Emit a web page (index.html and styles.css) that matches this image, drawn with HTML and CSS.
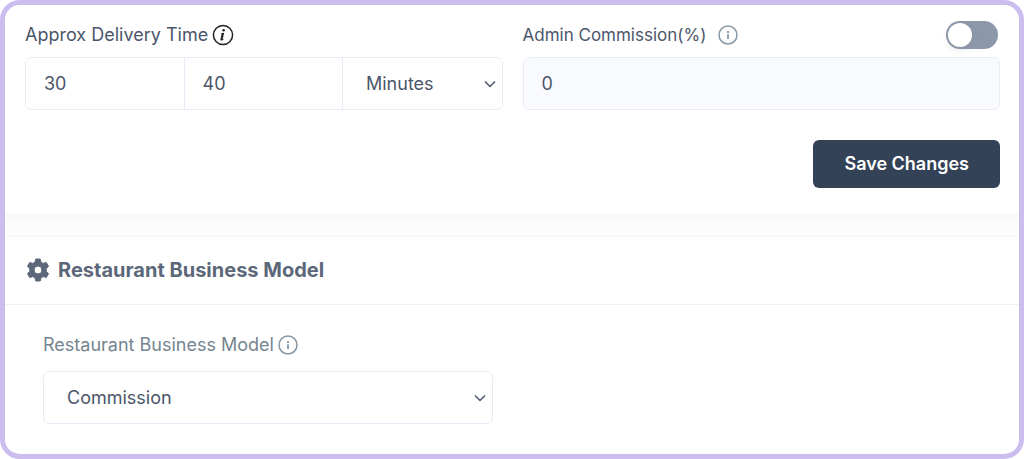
FILE: index.html
```html
<!DOCTYPE html>
<html lang="en">
<head>
    <meta charset="UTF-8">
    <meta name="viewport" content="width=device-width, initial-scale=1.0">
    <title>Restaurant Business Model</title>
    <link rel="stylesheet" href="styles.css">
</head>
<body>

    <main class="frame">
        <form class="card settings">
            <div class="row">
                <div class="field">
                    <div class="label-row">
                        <label for="min-time">Approx Delivery Time</label>
                        <svg class="info dark" viewBox="0 0 22 22">
                            <circle cx="11" cy="11" r="9.6" fill="none" stroke="currentColor" stroke-width="1.5"/>
                            <circle cx="11.6" cy="6.2" r="1.3" fill="currentColor"/>
                            <path d="M8.800 9.300l3.400-.5-1.500 6.200c-.1.500.3.500 1.400-.4-.8 1.500-1.800 2-2.600 2-1 0-1.300-.7-1-1.800l1.100-4.500z" fill="currentColor"/>
                        </svg>
                    </div>
                    <div class="input-group">
                        <input type="text" id="min-time" value="30">
                        <input type="text" id="max-time" value="40" aria-label="Maximum time">
                        <div class="select">
                            <select id="time-type" aria-label="Time unit">
                                <option>Minutes</option>
                                <option>Hours</option>
                            </select>
                            <svg class="arrow" viewBox="0 0 12 8"><path d="M1 1.5l5 5 5-5" fill="none" stroke="currentColor" stroke-width="1.5"/></svg>
                        </div>
                    </div>
                </div>

                <div class="field">
                    <div class="label-row compact">
                        <label for="commission">Admin Commission(%)</label>
                        <svg class="info" viewBox="0 0 20 20">
                            <circle cx="10" cy="10" r="9" fill="none" stroke="currentColor" stroke-width="1.5"/>
                            <path d="M10 6v2M10 9.300v4.700" stroke="currentColor" stroke-width="1.8"/>
                        </svg>
                        <input type="checkbox" class="toggle" aria-label="Enable admin commission">
                    </div>
                    <input type="text" id="commission" class="readonly" value="0" readonly>
                </div>
            </div>

            <div class="actions">
                <button type="button" class="btn">Save Changes</button>
            </div>
        </form>

        <section class="card model">
            <header class="card-header">
                <svg class="gear" viewBox="0 0 24 24">
                    <path fill="currentColor" stroke="currentColor" stroke-width="1" stroke-linejoin="round" fill-rule="evenodd" d="M9.800 1h4.400l.8 3.200 2.100 1.200 3.200-.9 2.200 3.800-2.300 2.400v2.600l2.300 2.400-2.200 3.800-3.200-.9-2.100 1.200-.8 3.200H9.800L9 19.800l-2.100-1.200-3.200.9-2.200-3.800 2.300-2.400v-2.600L1.500 8.300l2.200-3.800 3.200.9L9 4.200zM12 8a4 4 0 1 0 0 8 4 4 0 0 0 0-8z"/>
                </svg>
                <h2>Restaurant Business Model</h2>
            </header>
            <div class="card-body">
                <div class="field">
                    <div class="label-row muted">
                        <label for="business-model">Restaurant Business Model</label>
                        <svg class="info" viewBox="0 0 20 20">
                            <circle cx="10" cy="10" r="9" fill="none" stroke="currentColor" stroke-width="1.5"/>
                            <path d="M10 6v2M10 9.300v4.700" stroke="currentColor" stroke-width="1.8"/>
                        </svg>
                    </div>
                    <div class="select boxed">
                        <select id="business-model">
                            <option>Commission</option>
                            <option>Subscription</option>
                        </select>
                        <svg class="arrow" viewBox="0 0 12 8"><path d="M1 1.5l5 5 5-5" fill="none" stroke="currentColor" stroke-width="1.5"/></svg>
                    </div>
                </div>
            </div>
        </section>
    </main>

</body>
</html>
```

FILE: styles.css
```css
* {
    box-sizing: border-box;
}

body {
    font-family: Inter, "Liberation Sans", sans-serif;
    font-size: 18px;
    line-height: 28px;
    margin: 0;
    color: #4b566b;
    background-color: #fff;
}

.frame {
    min-height: 100vh;
    border: 5px solid #cbbdee;
    border-radius: 20px;
    background-color: #fdfdfd;
    overflow: hidden;
}

.card {
    background-color: #fff;
}

.settings {
    padding: 16px 19px 26px 20px;
    margin-bottom: 21px;
    border-bottom: 1px solid #f5f7f7;
    box-shadow: 0 4px 10px rgba(140, 152, 164, 0.06);
}

.row {
    display: grid;
    grid-template-columns: 1fr 1fr;
    gap: 20px;
}

.label-row {
    display: flex;
    align-items: center;
    gap: 4px;
    margin-bottom: 8px;
}

.label-row.compact {
    font-size: 17px;
    gap: 12px;
}

.muted {
    color: #758590;
}

.info {
    width: 20px;
    height: 20px;
    color: #8797a3;
}

.info.dark {
    width: 22px;
    height: 22px;
    color: #222;
}

.toggle {
    appearance: none;
    display: flex;
    width: 52px;
    height: 28px;
    margin: 0 2px 0 auto;
    padding: 2px;
    border-radius: 14px;
    background-color: #8c98a9;
    cursor: pointer;
}

.toggle::before {
    content: "";
    width: 24px;
    height: 24px;
    border-radius: 50%;
    background-color: #fff;
    box-shadow: 0 3px 6px rgba(140, 152, 164, 0.25);
}

.toggle:checked {
    justify-content: flex-end;
    background-color: #334257;
}

input[type="text"],
select {
    font: inherit;
    color: inherit;
    width: 100%;
    height: 51px;
    border: 0;
    padding: 0 18px;
    background-color: transparent;
}

.input-group,
.boxed,
input[type="text"].readonly {
    border: 1px solid #e9ecf7;
    border-radius: 6px;
}

.input-group {
    display: grid;
    grid-template-columns: 1fr 1fr 1fr;
}

.input-group input[type="text"] {
    border-right: 1px solid #e9ecf7;
}

input[type="text"].readonly {
    height: 53px;
    background-color: #f8fafe;
}

.select {
    position: relative;
}

select {
    display: block;
    appearance: none;
    padding: 0 23px;
}

.arrow {
    position: absolute;
    top: 50%;
    right: 6px;
    width: 12px;
    height: 8px;
    margin-top: -4px;
    pointer-events: none;
}

.actions {
    display: flex;
    justify-content: flex-end;
    margin-top: 30px;
}

.btn {
    font: inherit;
    font-weight: 600;
    color: #fff;
    background-color: #334257;
    border: none;
    border-radius: 6px;
    padding: 10px 31px;
    cursor: pointer;
}

.btn:hover {
    background-color: #28364a;
}

.model {
    border-top: 1px solid #f5f7f7;
}

.card-header {
    display: flex;
    align-items: center;
    gap: 8px;
    padding: 19px 21px 20px;
    border-bottom: 1px solid #eff1f8;
    color: #5c6879;
}

.card-header h2 {
    font-size: 20px;
    font-weight: 700;
    margin: 0;
}

.gear {
    width: 24px;
    height: 24px;
}

.card-body {
    display: grid;
    grid-template-columns: 1fr 1fr;
    gap: 38px;
    padding: 26px 38px 28px;
}

.card-body .label-row {
    margin-bottom: 12px;
}
```
